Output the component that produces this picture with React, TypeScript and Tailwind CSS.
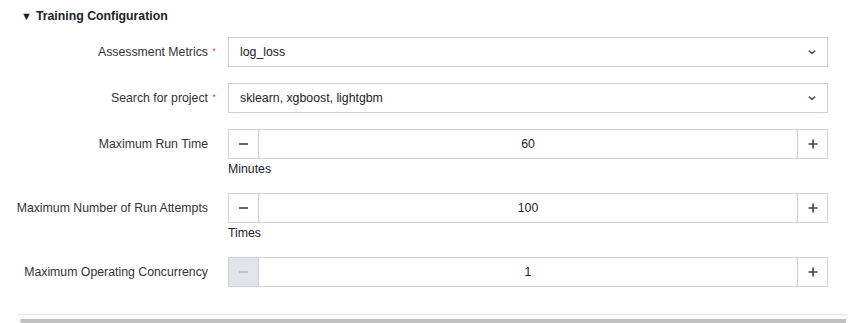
import React from "react";

const font = { fontFamily: '"Liberation Sans", Arial, sans-serif' };

function Label({ text, required }: { text: string; required?: boolean }) {
  return (
    <div className="relative w-[208px] shrink-0 text-right text-[12.3px] text-[#333]">
      {text}
      {required ? <span className="absolute right-[-8px] top-[2px] text-[9px] text-[#f53f3f]">*</span> : null}
    </div>
  );
}

function Chevron() {
  return (
    <svg width="10" height="10" viewBox="0 0 10 10" className="text-[#4e5969]">
      <path d="M1.8 3.6 L5 6.4 L8.2 3.6" fill="none" stroke="currentColor" strokeWidth="1.6" />
    </svg>
  );
}

function Select({ value }: { value: string }) {
  return (
    <div className="flex h-[30px] w-[600px] items-center justify-between border border-[#cdd0d6] bg-white pl-[11px] pr-[10px] text-[12.3px] text-[#1d2129]">
      <span>{value}</span>
      <Chevron />
    </div>
  );
}

function Stepper({ value, minDisabled }: { value: string; minDisabled?: boolean }) {
  return (
    <div className="flex h-[30px] w-[600px] border border-[#cdd0d6] bg-white text-[12.3px] text-[#1d2129]">
      <div className={"flex w-[30px] items-center justify-center border-r border-[#cdd0d6] " + (minDisabled ? "bg-[#e3e4ea]" : "")}>
        <span className={"block h-[2px] w-[9px] " + (minDisabled ? "bg-[#bfc1c7]" : "bg-[#666]")} />
      </div>
      <div className="flex flex-1 items-center justify-center">{value}</div>
      <div className="flex w-[30px] items-center justify-center border-l border-[#cdd0d6]">
        <svg width="10" height="10" viewBox="0 0 10 10">
          <path d="M5 0.5 V9.5 M0.5 5 H9.5" stroke="#444" strokeWidth="1.6" />
        </svg>
      </div>
    </div>
  );
}

export default function App() {
  return (
    <div className="flex h-[323px] w-[851px] flex-col overflow-hidden bg-white" style={font}>
      <div className="flex h-[33px] items-center gap-[4px] pl-[21px] text-[12.3px] font-bold text-[#1d2129]">
        <span className="text-[11px] leading-none">▼</span>
        <span>Training Configuration</span>
      </div>
      <div className="mt-[4px] flex flex-col gap-[16px]">
        <div className="flex items-center gap-[20px]">
          <Label text="Assessment Metrics" required />
          <Select value="log_loss" />
        </div>
        <div className="flex items-center gap-[20px]">
          <Label text="Search for project" required />
          <Select value="sklearn, xgboost, lightgbm" />
        </div>
        <div className="flex items-start gap-[20px]">
          <div className="flex h-[30px] items-center">
            <Label text="Maximum Run Time" />
          </div>
          <div className="flex flex-col">
            <Stepper value="60" />
            <div className="h-[18px] pt-[2px] text-[12.3px] leading-[16px] text-[#1d2129]">Minutes</div>
          </div>
        </div>
        <div className="flex items-start gap-[20px]">
          <div className="flex h-[30px] items-center">
            <Label text="Maximum Number of Run Attempts" />
          </div>
          <div className="flex flex-col">
            <Stepper value="100" />
            <div className="h-[18px] pt-[2px] text-[12.3px] leading-[16px] text-[#1d2129]">Times</div>
          </div>
        </div>
        <div className="flex items-center gap-[20px]">
          <Label text="Maximum Operating Concurrency" />
          <Stepper value="1" minDisabled />
        </div>
      </div>
      <div className="mt-auto ml-[18px] mr-[3px] h-[9px] border-t border-[#e6e6e6] bg-[#fafafa] pl-[2px] pr-[2px] pt-[4px]">
        <div className="h-full rounded-l-[3px] bg-[#c1c1c1]" />
      </div>
    </div>
  );
}
